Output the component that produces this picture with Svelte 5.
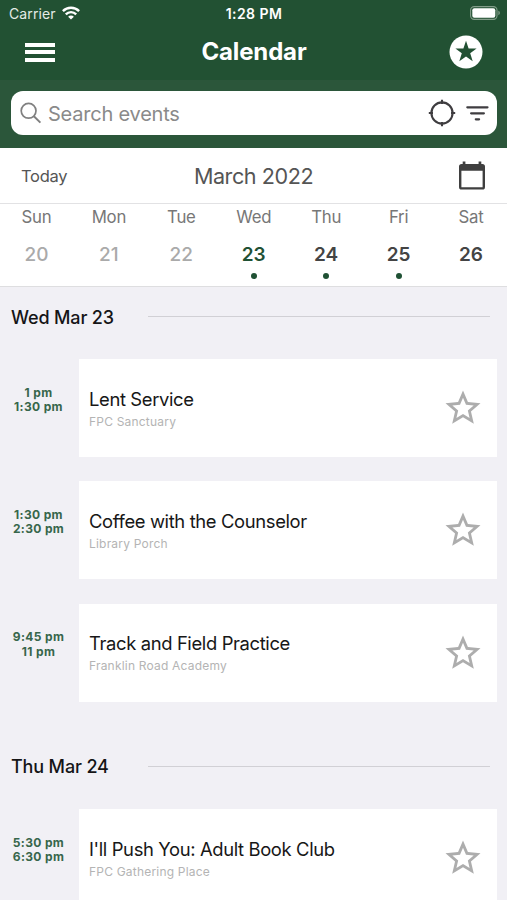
<script lang="ts">
  type CalendarEvent = { start: string; end: string; title: string; place: string };

  const week = [
    { name: 'Sun', date: 20, state: 'past', dot: false },
    { name: 'Mon', date: 21, state: 'past', dot: false },
    { name: 'Tue', date: 22, state: 'past', dot: false },
    { name: 'Wed', date: 23, state: 'today', dot: true },
    { name: 'Thu', date: 24, state: '', dot: true },
    { name: 'Fri', date: 25, state: '', dot: true },
    { name: 'Sat', date: 26, state: '', dot: false },
  ];

  const days: { label: string; events: CalendarEvent[] }[] = [
    {
      label: 'Wed Mar 23',
      events: [
        { start: '1 pm', end: '1:30 pm', title: 'Lent Service', place: 'FPC Sanctuary' },
        { start: '1:30 pm', end: '2:30 pm', title: 'Coffee with the Counselor', place: 'Library Porch' },
        { start: '9:45 pm', end: '11 pm', title: 'Track and Field Practice', place: 'Franklin Road Academy' },
      ],
    },
    {
      label: 'Thu Mar 24',
      events: [
        { start: '5:30 pm', end: '6:30 pm', title: "I'll Push You: Adult Book Club", place: 'FPC Gathering Place' },
      ],
    },
  ];
</script>

<div class="screen">
  <header>
    <div class="status">
      <div class="carrier">
        <span>Carrier</span>
        <svg width="18" height="14" viewBox="0 0 18 14" fill="none" stroke="#fff" stroke-width="2.4">
          <path d="M0.9 5.1C5.4 0.6 12.6 0.6 17.1 5.1" />
          <path d="M3.8 8.3C6.7 5.4 11.3 5.4 14.2 8.3" />
          <path d="M9 13.6L6.1 10.8C7.7 9.2 10.3 9.2 11.9 10.8Z" fill="#fff" stroke="none" />
        </svg>
      </div>
      <span class="clock">1:28 PM</span>
      <svg class="battery" width="31" height="14" viewBox="0 0 31 14">
        <rect x="0.6" y="0.6" width="26.4" height="12.8" rx="3.6" fill="none" stroke="#829d89" stroke-width="1.1" />
        <rect x="2.3" y="2.3" width="23" height="9.4" rx="2" fill="#fff" />
        <path d="M28.4 4.8C30.3 5.4 30.3 8.6 28.4 9.2Z" fill="#829d89" />
      </svg>
    </div>
    <div class="nav">
      <button class="menu" aria-label="Menu"><i></i><i></i><i></i></button>
      <h1>Calendar</h1>
      <button class="favorites" aria-label="Favorites">
        <svg width="34" height="34" viewBox="0 0 34 34">
          <circle cx="17" cy="17" r="16.5" fill="#fff" />
          <path d="M17 5.8L19.6 13.5H27.6L21.2 18.3L23.7 26.3L17 21.5L10.3 26.3L12.8 18.3L6.4 13.5H14.4Z" fill="#225133" />
        </svg>
      </button>
    </div>
  </header>

  <div class="search-wrap">
    <div class="search">
      <svg width="22" height="22" viewBox="0 0 22 22" fill="none" stroke="#808080" stroke-width="1.7">
        <circle cx="8.6" cy="8.8" r="7.4" />
        <path d="M13.9 14.3L20.4 20.6" stroke-width="2" />
      </svg>
      <span class="placeholder">Search events</span>
      <svg class="locate" width="28" height="28" viewBox="0 0 28 28" fill="none" stroke="#3f3d40" stroke-width="2.1">
        <circle cx="14" cy="14" r="10.6" />
        <path d="M14 0.8V5M14 23V27.2M0.8 14H5M23 14H27.2" />
      </svg>
      <svg class="filter" width="23" height="16" viewBox="0 0 23 16" stroke="#3f3d40" stroke-width="2.2" stroke-linecap="round">
        <path d="M1.3 2.3H21.5M5.1 8.3H17.9M9.8 14.3H13.1" />
      </svg>
    </div>
  </div>

  <div class="month">
    <span class="today-link">Today</span>
    <span class="month-name">March 2022</span>
    <svg width="28" height="30" viewBox="0 0 28 30">
      <path d="M4.7 0.5H7.4V3H20.6V0.5H23.3V3H24.4Q27 3 27 5.6V26Q27 28.6 24.4 28.6H3.6Q1 28.6 1 26V5.6Q1 3 3.6 3H4.7ZM3.4 9.8V26.3H24.6V9.8Z" fill="#3f3f3f" fill-rule="evenodd" />
    </svg>
  </div>

  <div class="week">
    {#each week as day}
      <div class="day {day.state}">
        <span class="name">{day.name}</span>
        <span class="date">{day.date}</span>
        {#if day.dot}
          <span class="dot"></span>
        {/if}
      </div>
    {/each}
  </div>

  <main>
    {#each days as day}
      <section>
        <div class="heading">
          <h2>{day.label}</h2>
          <hr />
        </div>
        {#each day.events as event}
          <div class="event">
            <div class="time">
              <span>{event.start}</span>
              <span>{event.end}</span>
            </div>
            <article>
              <div class="info">
                <h3>{event.title}</h3>
                <p>{event.place}</p>
              </div>
              <svg width="42" height="42" viewBox="0 0 24 24" fill="#adadad">
                <path d="M22 9.24l-7.19-.62L12 2 9.19 8.63 2 9.24l5.46 4.73L5.82 21 12 17.27 18.18 21l-1.63-7.03L22 9.24zM12 15.4l-3.76 2.27 1-4.28-3.32-2.88 4.38-.38L12 6.1l1.71 4.04 4.38.38-3.32 2.88 1 4.28L12 15.4z" />
              </svg>
            </article>
          </div>
        {/each}
      </section>
    {/each}
  </main>
</div>

<style>
  :global(body) {
    margin: 0;
    background: #f1f0f5;
  }

  .screen {
    width: 507px;
    height: 900px;
    overflow: hidden;
    background: #f1f0f5;
    font-family: Inter, 'Liberation Sans', sans-serif;
  }

  svg {
    display: block;
    flex-shrink: 0;
  }

  h1, h2, h3, p {
    margin: 0;
  }

  button {
    padding: 0;
    border: 0;
    background: none;
  }

  header {
    height: 80px;
    background: #225133;
    color: #fff;
  }

  .status {
    display: grid;
    grid-template-columns: 1fr auto 1fr;
    align-items: center;
    height: 26px;
    padding: 0 6px 0 9px;
    font-size: 14px;
  }

  .carrier {
    display: flex;
    align-items: center;
    gap: 6px;
    color: #e4ebe6;
    letter-spacing: 0.1px;
  }

  .clock {
    padding-right: 2px;
    font-size: 14px;
    font-weight: 600;
    letter-spacing: 0.45px;
  }

  .battery {
    justify-self: end;
  }

  .nav {
    display: grid;
    grid-template-columns: 1fr auto 1fr;
    align-items: center;
    height: 52px;
    padding: 0 24px 0 25px;
  }

  .menu {
    display: flex;
    flex-direction: column;
    gap: 3.5px;
    width: 30px;
  }

  .menu i {
    height: 4px;
    background: #fff;
  }

  h1 {
    padding-bottom: 2px;
    font-size: 24px;
    font-weight: 700;
    letter-spacing: -0.15px;
  }

  .favorites {
    justify-self: end;
  }

  .search-wrap {
    height: 68px;
    box-sizing: border-box;
    padding: 11px 10px 13px 11px;
    background: #2b563a;
  }

  .search {
    display: flex;
    align-items: center;
    height: 44px;
    padding: 0 8px 0 9px;
    border-radius: 12px;
    background: #fff;
  }

  .placeholder {
    flex: 1;
    margin-left: 6px;
    padding-top: 2px;
    color: #8a8a8a;
    font-size: 20px;
    letter-spacing: -0.22px;
  }

  .filter {
    margin-left: 10px;
  }

  .month {
    display: grid;
    grid-template-columns: 1fr auto 1fr;
    align-items: center;
    height: 55px;
    padding: 0 21px;
    background: #fff;
    color: #555;
  }

  .today-link {
    font-size: 16.5px;
    letter-spacing: -0.3px;
  }

  .month-name {
    font-size: 21.6px;
    letter-spacing: -0.45px;
  }

  .month svg {
    justify-self: end;
  }

  .week {
    display: grid;
    grid-template-columns: repeat(7, 1fr);
    height: 84px;
    box-sizing: border-box;
    border-top: 1px solid #e2e2e4;
    border-bottom: 1px solid #dedee0;
    background: #fff;
  }

  .day {
    display: flex;
    flex-direction: column;
    align-items: center;
    padding-left: 0.5px;
    color: #444;
  }

  .name {
    margin-top: 3px;
    color: #777;
    font-size: 16.8px;
    letter-spacing: -0.25px;
    line-height: 20px;
  }

  .date {
    margin-top: 16px;
    font-size: 19px;
    font-weight: 600;
    line-height: 24px;
  }

  .past .date {
    color: #aaa;
    font-weight: 500;
  }

  .today .date {
    color: #1f5134;
  }

  .dot {
    width: 6px;
    height: 6px;
    margin-top: 6px;
    border-radius: 50%;
    background: #1f5134;
  }

  section {
    padding-bottom: 11px;
  }

  .heading {
    display: flex;
    align-items: center;
    height: 60px;
    margin-bottom: 12.3px;
    padding: 0 17px 0 11px;
  }

  h2 {
    width: 137px;
    color: #151517;
    font-size: 18px;
    font-weight: 550;
    letter-spacing: -0.15px;
  }

  hr {
    flex: 1;
    margin: 0 0 1px;
    border: 0;
    border-top: 1px solid #d1d0d5;
  }

  .event {
    display: flex;
    height: 98px;
    margin-bottom: 24.15px;
    padding-right: 10px;
  }

  .time {
    display: flex;
    flex-direction: column;
    justify-content: center;
    width: 77px;
    margin-right: 2px;
    padding-bottom: 16px;
    color: #37664b;
    font-size: 12px;
    font-weight: 650;
    letter-spacing: 0.35px;
    line-height: 14.3px;
    text-align: center;
  }

  article {
    flex: 1;
    display: flex;
    align-items: center;
    justify-content: space-between;
    padding: 0 13px 0 10px;
    background: #fff;
  }

  .info {
    padding-top: 1px;
  }

  h3 {
    color: #171717;
    font-size: 18.4px;
    font-weight: 400;
    letter-spacing: -0.36px;
    line-height: 24px;
  }

  p {
    margin-top: 2px;
    color: #b4b4b4;
    font-size: 12px;
    letter-spacing: 0.2px;
    line-height: 18px;
  }
</style>
